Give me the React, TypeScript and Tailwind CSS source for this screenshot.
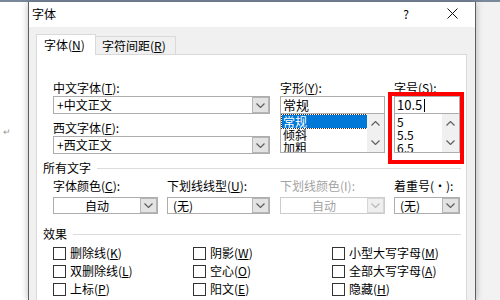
import React from "react";

function Chevron({ up = false, color = "#606060" }: { up?: boolean; color?: string }) {
  return (
    <svg width="9" height="5" viewBox="0 0 9 5">
      <path
        d={up ? "M0.5 4.5 L4.5 0.5 L8.5 4.5" : "M0.5 0.5 L4.5 4.5 L8.5 0.5"}
        fill="none"
        stroke={color}
        strokeWidth="1.2"
      />
    </svg>
  );
}

function DropButton({ disabled = false }: { disabled?: boolean }) {
  return (
    <div
      className={`w-[17px] h-full shrink-0 flex items-center justify-center border ${
        disabled ? "bg-[#efefef] border-[#d6d6d6]" : "bg-[#e3e3e3] border-[#b5b5b5]"
      }`}
    >
      <Chevron color={disabled ? "#b8b8b8" : "#606060"} />
    </div>
  );
}

function Combo({ text, className }: { text: string; className: string }) {
  return (
    <div className={`flex h-[18px] border border-[#adadad] bg-white ${className}`}>
      <div className="flex-1 pl-[3px] leading-[16px]">{text}</div>
      <DropButton />
    </div>
  );
}

function Select({
  text,
  className,
  center = false,
  disabled = false,
}: {
  text: string;
  className: string;
  center?: boolean;
  disabled?: boolean;
}) {
  return (
    <div
      className={`flex h-[17px] border bg-white ${
        disabled ? "border-[#cccccc] text-[#a3a3a3]" : "border-[#adadad]"
      } ${className}`}
    >
      <div className={`flex-1 leading-[15px] ${center ? "text-center" : "pl-[5px]"}`}>{text}</div>
      <DropButton disabled={disabled} />
    </div>
  );
}

function ListBox({ items, selected }: { items: string[]; selected?: number }) {
  return (
    <div className="flex h-[39px] border border-[#adadad] border-t-0 bg-white overflow-hidden">
      <div className="flex-1 pl-[1px] pt-[1px]">
        {items.map((it, i) => (
          <div
            key={it}
            className={`h-[13px] leading-[13px] pl-[1px] ${
              i === selected ? "bg-[#0078d7] text-white outline-1 outline-dotted outline-[#333]" : ""
            }`}
          >
            {it}
          </div>
        ))}
      </div>
      <div className="w-[17px] shrink-0 bg-[#f0f0f0] flex flex-col justify-between items-center py-[7px]">
        <Chevron up />
        <Chevron />
      </div>
    </div>
  );
}

function Check({ label, k }: { label: string; k: string }) {
  return (
    <div className="flex items-center h-[18px]">
      <div className="w-[13px] h-[13px] border border-[#333] bg-white shrink-0" />
      <span className="ml-[4px] leading-[16px]">
        {label}(<u>{k}</u>)
      </span>
    </div>
  );
}

export default function App() {
  return (
    <div className="w-[500px] h-[300px] overflow-hidden bg-white flex flex-col text-[12px] text-black font-[family-name:'Noto_Sans_CJK_SC','Noto_Sans',sans-serif]">
      <div className="h-[2px] shrink-0 bg-[#7a889c]" />
      <div className="flex flex-1 min-h-0">
        {/* Word page */}
        <div className="w-[28px] shrink-0 bg-white pt-[119px] pl-[3px]">
          <span className="text-[9px] leading-[10px] text-[#9a9a9a]">↵</span>
        </div>

        {/* Dialog */}
        <div className="w-[448px] shrink-0 flex flex-col border-x border-[#5e5e5e] bg-[#f0f0f0] shadow-[0_0_7px_rgba(0,0,0,0.28)] relative z-10">
          <div className="h-[25px] shrink-0 bg-white flex items-center">
            <span className="pl-[3px] pb-[2px] leading-[16px]">字体</span>
            <div className="ml-auto flex h-full">
              <div className="w-[46px] flex items-center justify-center pb-[2px] text-[12px]">?</div>
              <div className="w-[46px] flex items-center justify-center pb-[2px]">
                <svg width="11" height="11" viewBox="0 0 11 11">
                  <path d="M0.5 0.5 L10.5 10.5 M10.5 0.5 L0.5 10.5" stroke="#111" strokeWidth="1" />
                </svg>
              </div>
            </div>
          </div>

          <div className="flex-1 flex flex-col pl-[7px] pr-[8px] pt-[6px]">
            {/* Tabs */}
            <div className="flex items-end h-[21px] shrink-0">
              <div className="relative z-10 w-[60px] h-[21px] -mb-px bg-white border-x border-t border-[#d9d9d9] pl-[7px] leading-[20px]">
                字体(<u>N</u>)
              </div>
              <div className="w-[80px] h-[18px] border-t border-r border-[#d9d9d9] pl-[6px] leading-[17px]">
                字符间距(<u>R</u>)
              </div>
            </div>

            {/* Panel */}
            <div className="flex-1 bg-white border border-[#d9d9d9] pl-[6px] pr-[5px] pt-[25px]">
              <div className="flex ml-[10px]">
                <div className="w-[217px] shrink-0">
                  <div className="leading-[16px]">中文字体(<u>T</u>):</div>
                  <Combo text="+中文正文" className="w-[217px]" />
                  <div className="leading-[16px] mt-[6px]">西文字体(<u>F</u>):</div>
                  <Combo text="+西文正文" className="w-[217px]" />
                </div>
                <div className="w-[105px] shrink-0 ml-[10px]">
                  <div className="leading-[16px]">字形(<u>Y</u>):</div>
                  <div className="h-[18px] border border-[#adadad] pl-[2px] text-[13px] leading-[16px]">常规</div>
                  <ListBox items={["常规", "倾斜", "加粗"]} selected={0} />
                </div>
                <div className="w-[66px] shrink-0 ml-[9px] relative">
                  <div className="leading-[16px]">字号(<u>S</u>):</div>
                  <div className="h-[18px] border border-[#adadad] pl-[2px] leading-[16px] flex items-center">
                    <span className="text-[13px]">10.5</span>
                    <span className="w-px h-[13px] bg-black ml-[2px]" />
                  </div>
                  <ListBox items={["5", "5.5", "6.5"]} />
                  <div className="absolute -left-[6px] top-[12px] w-[76px] h-[72px] border-[4px] border-[#ff0000]" />
                </div>
              </div>

              <div className="flex items-center mt-[6px] h-[16px]">
                <span className="leading-[16px]">所有文字</span>
                <div className="flex-1 h-px bg-[#dcdcdc] ml-[6px]" />
              </div>

              <div className="flex ml-[10px] mt-[2px]">
                <div className="w-[105px] shrink-0">
                  <div className="leading-[16px]">字体颜色(<u>C</u>):</div>
                  <Select text="自动" center className="w-[105px] mt-[3px]" />
                </div>
                <div className="w-[103px] shrink-0 ml-[9px]">
                  <div className="leading-[16px] whitespace-nowrap">下划线线型(<u>U</u>):</div>
                  <Select text="(无)" className="w-[103px] mt-[3px]" />
                </div>
                <div className="w-[105px] shrink-0 ml-[10px]">
                  <div className="leading-[16px] text-[#a3a3a3] whitespace-nowrap">下划线颜色(I):</div>
                  <Select text="自动" center disabled className="w-[105px] mt-[3px]" />
                </div>
                <div className="w-[66px] shrink-0 ml-[9px]">
                  <div className="leading-[16px] whitespace-nowrap">着重号(·):</div>
                  <Select text="(无)" className="w-[66px] mt-[3px]" />
                </div>
              </div>

              <div className="flex items-center mt-[12px] h-[16px]">
                <span className="leading-[16px]">效果</span>
                <div className="flex-1 h-px bg-[#dcdcdc] ml-[6px]" />
              </div>

              <div className="flex ml-[10px] mt-[2px]">
                <div className="w-[140px] shrink-0">
                  <Check label="删除线" k="K" />
                  <Check label="双删除线" k="L" />
                  <Check label="上标" k="P" />
                  <Check label="下标" k="B" />
                </div>
                <div className="w-[139px] shrink-0">
                  <Check label="阴影" k="W" />
                  <Check label="空心" k="O" />
                  <Check label="阳文" k="E" />
                  <Check label="阴文" k="G" />
                </div>
                <div className="flex-1">
                  <Check label="小型大写字母" k="M" />
                  <Check label="全部大写字母" k="A" />
                  <Check label="隐藏" k="H" />
                </div>
              </div>
            </div>
          </div>
        </div>

        {/* Word background right */}
        <div className="flex-1 bg-[#f2f2f2]" />
      </div>
    </div>
  );
}
